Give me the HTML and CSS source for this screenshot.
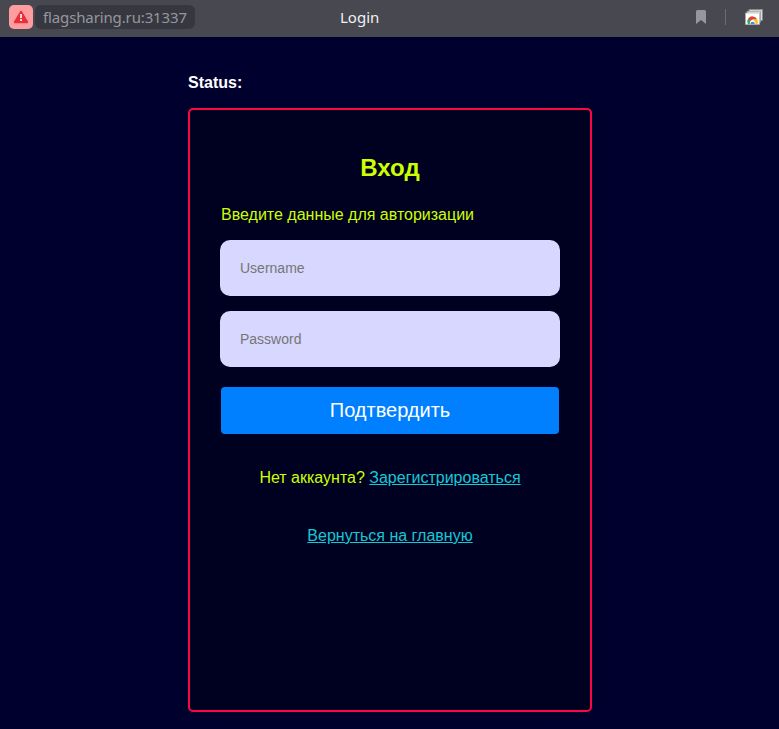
FILE: index.html
```html
<!DOCTYPE html>
<html lang="ru">
<head>
<meta charset="utf-8">
<title>Login</title>
<link rel="stylesheet" href="styles.css">
</head>
<body>
<header class="browser">
  <div class="address">
    <span class="warning">
      <svg width="16" height="14" viewBox="0 0 16 14"><path d="M8 2 14 12H2Z" fill="#e6303b" stroke="#e6303b" stroke-width="2.4" stroke-linejoin="round"/><path d="M7 4h2v4H7zM7 9h2v2H7z" fill="#ffd9da"/></svg>
    </span>
    <span class="url">flagsharing.ru:31337</span>
  </div>
  <div class="tab-title">Login</div>
  <div class="tools">
    <svg class="bookmark" width="10" height="14" viewBox="0 0 10 14"><path d="M1.5 0h7Q10 0 10 1.5V14L5 10 0 14V1.5Q0 0 1.5 0Z" fill="#96979d"/></svg>
    <span class="divider"></span>
    <svg class="extension" width="18" height="16" viewBox="0 0 18 16">
      <rect x="4" y=".5" width="13.5" height="11" fill="#dedede" stroke="#888" stroke-width=".7"/>
      <rect x="2" y="2.2" width="13.5" height="11" fill="#eee" stroke="#888" stroke-width=".7"/>
      <rect x=".5" y="4" width="14" height="11.5" fill="#fff" stroke="#aaa" stroke-width=".7"/>
      <path d="M3.2 9.6A5.2 5.2 0 0 1 12.3 10.6H7.5L5 12.5Z" fill="#e34133"/>
      <path d="M3.2 9.6A5.2 5.2 0 0 0 2.8 15H7L5.5 12.5Z" fill="#2da94f"/>
      <path d="M8 10.6h4.3A5.2 5.2 0 0 1 12.6 15H9Z" fill="#fbc116"/>
      <path d="M4.8 15a2.9 2.9 0 1 1 5.6 0Z" fill="#fff"/>
      <path d="M5.4 15a2.2 2.2 0 1 1 4.4 0Z" fill="#4285f4"/>
    </svg>
  </div>
</header>
<main class="page">
  <p class="status">Status:</p>
  <form class="card">
    <h1 class="title">Вход</h1>
    <label class="hint" for="username">Введите данные для авторизации</label>
    <input class="field" id="username" type="text" placeholder="Username">
    <input class="field" type="password" placeholder="Password">
    <button class="submit" type="button">Подтвердить</button>
    <p class="register">Нет аккаунта? <a class="link" href="#">Зарегистрироваться</a></p>
    <p class="home"><a class="link" href="#">Вернуться на главную</a></p>
  </form>
</main>
</body>
</html>
```
FILE: styles.css
```css
* { box-sizing: border-box; }
body {
  margin: 0;
  min-height: 729px;
  background: #00002f;
  color: #fff;
  font: 16px/18px "Liberation Sans", Arial, sans-serif;
}
.browser {
  display: grid;
  grid-template-columns: 331px auto 1fr;
  align-items: center;
  height: 37px;
  padding: 0 16px 3px 9px;
  background: #484850;
  font: 15px/24px "Noto Sans", sans-serif;
}
.address { display: flex; gap: 2px; }
.warning {
  display: flex;
  align-items: center;
  justify-content: center;
  width: 24px;
  height: 24px;
  border-radius: 5px;
  background: #ff9c9f;
}
.url {
  width: 160px;
  height: 24px;
  padding-left: 8px;
  border-radius: 6px;
  background: #363740;
  color: #96979d;
  letter-spacing: -.13px;
  white-space: nowrap;
}
.tab-title { color: #f0f0f2; }
.tools { display: flex; align-items: center; justify-content: flex-end; }
.divider { width: 1px; height: 16px; margin: 0 19px; background: #6b6c74; }
.page { width: 404px; margin: 0 0 0 188px; padding-top: 37px; }
.status { margin: 0 0 16px; font-weight: bold; }
.card {
  height: 604px;
  padding: 44px 30px 0;
  border: 2px solid #ff0546;
  border-radius: 5px;
  background: #000020;
  box-shadow: 0 0 30px rgba(0, 0, 32, .3);
}
.title { margin: 0 0 24px; color: #cf0; font-size: 24px; line-height: 28px; text-align: center; }
.hint { display: block; margin: 0 0 16px 1px; color: #cf0; }
.field {
  display: block;
  width: 340px;
  height: 56px;
  margin: 0 0 15px;
  padding: 0 20px;
  border: 0;
  border-radius: 10px;
  background: #d7d7ff;
  font: 14px "Liberation Sans", Arial, sans-serif;
}
.field::placeholder { color: #757575; }
.submit {
  display: block;
  width: 338px;
  height: 47px;
  margin: 20px 1px 35px;
  padding: 0;
  border: 0;
  border-radius: 4px;
  background: #0080ff;
  color: #fff;
  font: 20px "Liberation Sans", Arial, sans-serif;
}
.register, .home { margin: 0 0 40px; color: #cf0; text-align: center; }
.link { color: #14c8d4; }
```
